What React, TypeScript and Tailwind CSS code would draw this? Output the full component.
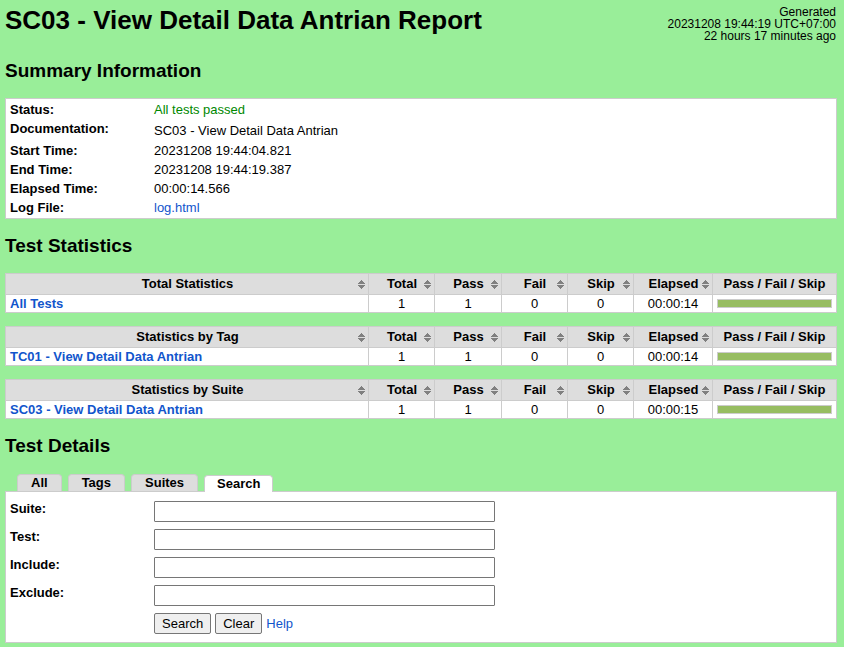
import React from "react";

type Stat = { title: string; name: string; elapsed: string };

const stats: Stat[] = [
  { title: "Total Statistics", name: "All Tests", elapsed: "00:00:14" },
  { title: "Statistics by Tag", name: "TC01 - View Detail Data Antrian", elapsed: "00:00:14" },
  { title: "Statistics by Suite", name: "SC03 - View Detail Data Antrian", elapsed: "00:00:15" },
];

const tabs = ["All", "Tags", "Suites", "Search"];
const fields = ["Suite", "Test", "Include", "Exclude"];

function SortIcon() {
  return (
    <svg
      className="col-start-1 row-start-1 justify-self-end"
      width="7"
      height="9"
      viewBox="0 0 7 9"
      fill="#808080"
      shapeRendering="crispEdges"
      aria-hidden="true"
    >
      <path d="M3 0h1v1h1v1h1v1h1v1H0V3h1V2h1V1h1zM0 5h7v1H6v1H5v1H4v1H3V8H2V7H1V6H0z" />
    </svg>
  );
}

function SortHeader({ label }: { label: string }) {
  return (
    <th scope="col" className="h-[21px] border border-[#ccc] p-0 font-bold">
      <div className="grid items-center pr-[3px]">
        <span className="col-start-1 row-start-1 justify-self-center pl-1">{label}</span>
        <SortIcon />
      </div>
    </th>
  );
}

function StatTable({ stat }: { stat: Stat }) {
  return (
    <table className="w-full table-fixed border-collapse border border-[#ccc] bg-white text-center">
      <colgroup>
        <col />
        <col className="w-[66px]" />
        <col className="w-[67px]" />
        <col className="w-[66px]" />
        <col className="w-[66px]" />
        <col className="w-[79px]" />
        <col className="w-[124px]" />
      </colgroup>
      <thead className="bg-[#ddd]">
        <tr>
          <SortHeader label={stat.title} />
          <SortHeader label="Total" />
          <SortHeader label="Pass" />
          <SortHeader label="Fail" />
          <SortHeader label="Skip" />
          <SortHeader label="Elapsed" />
          <th scope="col" className="border border-[#ccc] p-0 font-bold">Pass / Fail / Skip</th>
        </tr>
      </thead>
      <tbody>
        <tr>
          <td className="h-[18px] border border-[#ccc] px-1 py-0 text-left font-bold">
            <a href="#details" className="text-[#15c]">{stat.name}</a>
          </td>
          <td className="border border-[#ccc] p-0">1</td>
          <td className="border border-[#ccc] p-0">1</td>
          <td className="border border-[#ccc] p-0">0</td>
          <td className="border border-[#ccc] p-0">0</td>
          <td className="border border-[#ccc] p-0">{stat.elapsed}</td>
          <td className="border border-[#ccc] px-1 py-0">
            <div className="h-[9px] border border-[#ccc] bg-[#97bd61]" />
          </td>
        </tr>
      </tbody>
    </table>
  );
}

function SummaryRow({ label, children }: { label: string; children: React.ReactNode }) {
  return (
    <tr>
      <th scope="row" className="w-36 p-0 text-left align-top leading-[19px] font-bold">{label}</th>
      <td className="p-0 align-top leading-[19px]">{children}</td>
    </tr>
  );
}

export default function App() {
  return (
    <div className="min-h-screen bg-[#9e9] pr-[7px] pb-1 pl-[5px] font-['Liberation_Sans',Arial,sans-serif] text-[13px] leading-4 text-black">
      <header className="flex items-start justify-between pt-[6px] pr-px pb-0.5">
        <h1 className="text-[26px] leading-7 font-bold">SC03 - View Detail Data Antrian Report</h1>
        <div className="text-right text-xs leading-3">
          <div>Generated</div>
          <div>20231208 19:44:19 UTC+07:00</div>
          <div>22 hours 17 minutes ago</div>
        </div>
      </header>

      <h2 className="my-[15px] text-[19px] leading-6 font-bold">Summary Information</h2>
      <div className="border border-[#ccc] bg-white px-1 py-px">
        <table className="w-full border-collapse">
          <tbody>
            <SummaryRow label="Status:">
              <span className="text-[#080]">All tests passed</span>
            </SummaryRow>
            <SummaryRow label="Documentation:">
              <p className="pt-0.5 pb-px">SC03 - View Detail Data Antrian</p>
            </SummaryRow>
            <SummaryRow label="Start Time:">20231208 19:44:04.821</SummaryRow>
            <SummaryRow label="End Time:">20231208 19:44:19.387</SummaryRow>
            <SummaryRow label="Elapsed Time:">00:00:14.566</SummaryRow>
            <SummaryRow label="Log File:">
              <a href="#log" className="text-[#15c]">log.html</a>
            </SummaryRow>
          </tbody>
        </table>
      </div>

      <h2 className="my-[15px] text-[19px] leading-6 font-bold">Test Statistics</h2>
      <div className="flex flex-col gap-[13px]">
        {stats.map((s) => (
          <StatTable key={s.title} stat={s} />
        ))}
      </div>

      <h2 id="details" className="my-[15px] text-[19px] leading-6 font-bold">Test Details</h2>
      <div className="ml-3 flex items-end gap-[6px] pt-px">
        {tabs.map((t) =>
          t === "Search" ? (
            <button
              key={t}
              type="button"
              className="-mb-px h-[17px] rounded-t border border-b-0 border-[#ccc] bg-white px-3 leading-4 font-bold"
            >
              {t}
            </button>
          ) : (
            <button
              key={t}
              type="button"
              className="h-[17px] rounded-t border border-b-0 border-[#ccc] bg-[#ddd] px-[13px] leading-4 font-bold"
            >
              {t}
            </button>
          )
        )}
      </div>
      <form className="border border-[#ccc] bg-white px-1 pt-[9px] pb-2" onSubmit={(e) => e.preventDefault()}>
        {fields.map((f) => (
          <div key={f} className="mb-[7px] flex items-start">
            <label htmlFor={f} className="w-36 font-bold">{f}:</label>
            <input
              id={f}
              type="text"
              className="h-[21px] w-[341px] rounded-[1px] border border-[#767676] bg-white px-1"
            />
          </div>
        ))}
        <div className="ml-36 flex items-center gap-1">
          <button type="submit" className="h-[21px] rounded-xs border border-[#767676] bg-[#efefef] px-[7px]">Search</button>
          <button type="button" className="h-[21px] rounded-xs border border-[#767676] bg-[#efefef] px-[7px]">Clear</button>
          <a href="#help" className="text-[#15c]">Help</a>
        </div>
      </form>
    </div>
  );
}
